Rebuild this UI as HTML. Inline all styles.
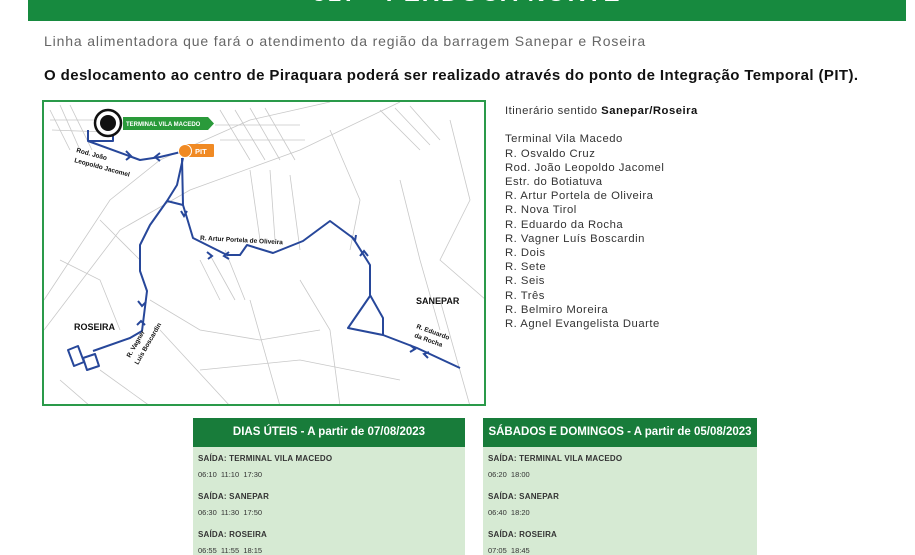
<!DOCTYPE html>
<html><head><meta charset="utf-8"><style>
*{margin:0;padding:0;box-sizing:border-box}
body{width:915px;height:555px;overflow:hidden;background:#fff;font-family:"Liberation Sans",sans-serif;position:relative}
.abs{position:absolute}
.hdr{left:28px;top:0;width:878px;height:21px;background:#178a3f;overflow:hidden}
.hdr span{position:absolute;left:0;right:0;top:-20px;text-align:center;color:#fff;font-weight:bold;font-size:24px;letter-spacing:2px}
.sub{left:44px;top:33px;font-size:14px;color:#666;letter-spacing:0.85px;white-space:nowrap}
.bold{left:44px;top:67px;font-size:15px;font-weight:bold;color:#111;letter-spacing:0.4px;white-space:nowrap}
.map{left:42px;top:100px;width:444px;height:306px;border:2px solid #2a9a4a;background:#fff;overflow:hidden}
.itin{left:505px;top:104px;font-size:11.3px;color:#333;line-height:14.2px;letter-spacing:0.5px;white-space:nowrap}
.tbl{top:418px;height:137px;background:#d6ead3}
.tbl .th{height:29px;background:#187c3a;color:#fff;font-weight:bold;font-size:11.5px;text-align:center;line-height:29px;white-space:nowrap}
.tbl .b{padding:7px 0 0 5px;font-size:8px;color:#333;line-height:9px}
.tbl .b .s{font-weight:bold;letter-spacing:0.2px}
.tbl .b .t{margin:7px 0 13px 0;font-size:7.5px}
</style></head><body>
<div class="abs hdr"><span>517 - PERDOCA NORTE</span></div>
<div class="abs sub">Linha alimentadora que fará o atendimento da região da barragem Sanepar e Roseira</div>
<div class="abs bold">O deslocamento ao centro de Piraquara poderá ser realizado através do ponto de Integração Temporal (PIT).</div>
<div class="abs map">
<svg width="444" height="306" viewBox="44 102 444 306" xmlns="http://www.w3.org/2000/svg">
<g stroke="#c8c8c8" stroke-width="0.8" fill="none">
<path d="M44,300 L110,200 L160,160 L250,120 L330,102"/>
<path d="M44,330 L120,230 L190,190 L300,150 L400,102"/>
<path d="M50,110 L70,150 M60,105 L80,150 M70,105 L92,150 M50,120 L100,120 M52,130 L105,132"/>
<path d="M220,110 L250,160 M235,110 L265,160 M250,108 L280,160 M265,108 L295,160 M215,125 L300,125 M220,140 L305,140"/>
<path d="M380,110 L420,150 M395,108 L430,145 M410,106 L440,140 M450,120 L470,200 L440,260 L486,300"/>
<path d="M250,170 L260,240 M270,170 L275,240 M290,175 L300,250 M200,260 L220,300 M210,255 L235,300 M225,250 L245,300"/>
<path d="M100,220 L140,260 M60,260 L100,280 L120,330 M300,280 L330,330 L340,406 M250,300 L280,406 M160,330 L230,406"/>
<path d="M330,130 L360,200 L350,250 M400,180 L420,260 L440,330 M440,300 L470,406 M100,370 L150,406 M60,380 L90,406"/>
<path d="M150,300 L200,330 L260,340 L320,330 M200,370 L300,360 L400,380"/>
</g>
<g stroke="#27479a" stroke-width="2" fill="none" stroke-linejoin="round">
<path d="M88,130 L88,141 L113,141 L113,130"/>
<path d="M88,141 L140,160 L160,157 L185,151"/>
<path d="M183,158 L177,185 L167,201 L150,225 L140,245 L140,271 L147,291 L142,331 L130,338 L93,351"/>
<path d="M182,158 L183,205 L187,218 L193,238 L227,255 L240,255 L247,245 L273,253 L303,241 L330,221 L353,238 L370,265 L370,295 L383,318 L383,335 L417,348 L460,368"/>
<path d="M167,201 L183,205"/>
<path d="M370,296 L348,328 L383,335"/>
<path d="M68,350 L78,346 L84,362 L74,366 Z M83,358 L95,354 L99,366 L87,370 Z"/>
</g>
<g stroke="#27479a" stroke-width="2" fill="none">
<path d="M126,151 l5,5 l-5,4"/><path d="M160,153 l-5,4 l5,4"/><path d="M181,211 l3,5 l3,-5"/><path d="M207,252 l5,4 l-4,3"/><path d="M229,252 l-5,4 l5,3"/><path d="M351,236 l4,5 l1,-6"/><path d="M360,256 l4,-5 l4,5"/><path d="M138,301 l4,5 l4,-4"/><path d="M137,325 l4,-4 l4,4"/><path d="M410,345 l5,4 l-5,3"/><path d="M429,352 l-5,2 l4,4"/>
</g>
<circle cx="108" cy="123" r="13" fill="#fff" stroke="#111" stroke-width="2.5"/>
<circle cx="108" cy="123" r="8" fill="#111"/>
<path d="M123,117 L208,117 L214,123.5 L208,130 L123,130 Z" fill="#2a9a3a"/>
<text x="126" y="126" font-size="6" font-weight="bold" fill="#fff" font-family="Liberation Sans">TERMINAL VILA MACEDO</text>
<rect x="186" y="144" width="28" height="13" rx="1" fill="#f08a24"/>
<circle cx="185" cy="151" r="6.5" fill="#f08a24" stroke="#fff" stroke-width="1"/>
<text x="195" y="154" font-size="7.5" font-weight="bold" fill="#fff" font-family="Liberation Sans">PIT</text>
<g font-family="Liberation Sans" font-weight="bold" fill="#111">
<text x="76" y="152" font-size="6.5" transform="rotate(15 76 152)">Rod. João</text>
<text x="74" y="162" font-size="6.5" transform="rotate(15 74 162)">Leopoldo Jacomel</text>
<text x="200" y="240" font-size="6.5" transform="rotate(3 200 240)">R. Artur Portela de Oliveira</text>
<text x="74" y="330" font-size="9">ROSEIRA</text>
<text x="416" y="304" font-size="9">SANEPAR</text>
<text x="130" y="358" font-size="6.5" transform="rotate(-60 130 358)">R. Vagner</text>
<text x="138" y="365" font-size="6.5" transform="rotate(-60 138 365)">Luis Boscardin</text>
<text x="416" y="328" font-size="6.5" transform="rotate(20 416 328)">R. Eduardo</text>
<text x="414" y="337" font-size="6.5" transform="rotate(20 414 337)">da Rocha</text>
</g>
</svg>
</div>
<div class="abs itin">Itinerário sentido <b style="color:#111">Sanepar/Roseira</b><br><br>Terminal Vila Macedo<br>R. Osvaldo Cruz<br>Rod. João Leopoldo Jacomel<br>Estr. do Botiatuva<br>R. Artur Portela de Oliveira<br>R. Nova Tirol<br>R. Eduardo da Rocha<br>R. Vagner Luís Boscardin<br>R. Dois<br>R. Sete<br>R. Seis<br>R. Três<br>R. Belmiro Moreira<br>R. Agnel Evangelista Duarte</div>
<div class="abs tbl" style="left:193px;width:272px"><div class="th">DIAS ÚTEIS - A partir de 07/08/2023</div>
<div class="b"><div class="s">SAÍDA: TERMINAL VILA MACEDO</div><div class="t">06:10&nbsp; 11:10&nbsp; 17:30</div><div class="s">SAÍDA: SANEPAR</div><div class="t">06:30&nbsp; 11:30&nbsp; 17:50</div><div class="s">SAÍDA: ROSEIRA</div><div class="t">06:55&nbsp; 11:55&nbsp; 18:15</div></div></div>
<div class="abs tbl" style="left:483px;width:274px"><div class="th">SÁBADOS E DOMINGOS - A partir de 05/08/2023</div>
<div class="b"><div class="s">SAÍDA: TERMINAL VILA MACEDO</div><div class="t">06:20&nbsp; 18:00</div><div class="s">SAÍDA: SANEPAR</div><div class="t">06:40&nbsp; 18:20</div><div class="s">SAÍDA: ROSEIRA</div><div class="t">07:05&nbsp; 18:45</div></div></div>
</body></html>
